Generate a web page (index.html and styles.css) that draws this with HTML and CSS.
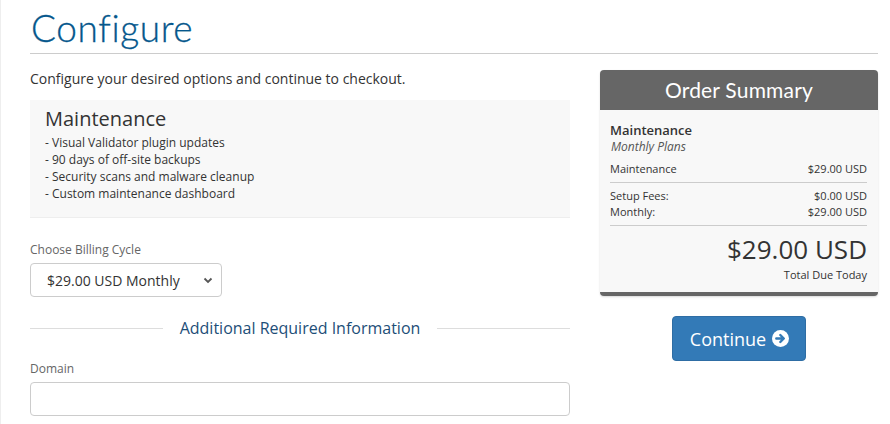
FILE: index.html
```html
<!DOCTYPE html>
<html>
<head>
<meta charset="utf-8">
<link rel="stylesheet" href="styles.css">
</head>
<body>
<div class="page">
  <div class="header">
    <h1 class="title">Configure</h1>
  </div>
  <div class="columns">
    <div class="main">
      <p class="intro">Configure your desired options and continue to checkout.</p>
      <div class="product">
        <div class="product-name">Maintenance</div>
        <div class="product-desc">
          <div>- Visual Validator plugin updates</div>
          <div>- 90 days of off-site backups</div>
          <div>- Security scans and malware cleanup</div>
          <div>- Custom maintenance dashboard</div>
        </div>
      </div>
      <label class="field-label">Choose Billing Cycle</label>
      <div class="select">
        <span>$29.00 USD Monthly</span>
        <svg class="chev" width="10" height="7" viewBox="0 0 10 7"><path d="M1.5 1.5 L5 5 L8.5 1.5" fill="none" stroke="#555" stroke-width="1.8"/></svg>
      </div>
      <div class="sub-heading">
        <span class="line"></span>
        <span class="sub-text">Additional Required Information</span>
        <span class="line"></span>
      </div>
      <label class="field-label domain-label">Domain</label>
      <div class="input"></div>
    </div>
    <div class="side">
      <div class="summary">
        <div class="summary-head">Order Summary</div>
        <div class="summary-body">
          <div class="s-name">Maintenance</div>
          <div class="s-group">Monthly Plans</div>
          <div class="s-row first-row"><span>Maintenance</span><span>$29.00 USD</span></div>
          <div class="s-hr"></div>
          <div class="s-row"><span>Setup Fees:</span><span>$0.00 USD</span></div>
          <div class="s-row"><span>Monthly:</span><span>$29.00 USD</span></div>
          <div class="s-hr"></div>
          <div class="s-total">$29.00 USD</div>
          <div class="s-due">Total Due Today</div>
        </div>
      </div>
      <div class="btn-wrap">
        <div class="btn">Continue <svg class="arrow" width="17" height="17" viewBox="0 0 17 17"><circle cx="8.5" cy="8.5" r="8.5" fill="#fff"/><path d="M4.3 8.5 H11.5 M8.3 5 L11.8 8.5 L8.3 12" fill="none" stroke="#337ab7" stroke-width="2.4" stroke-linecap="round" stroke-linejoin="round"/></svg></div>
      </div>
    </div>
  </div>
</div>
</body>
</html>
```

FILE: styles.css
```css
html, body {
  margin: 0;
  padding: 0;
  background: #fff;
}
body {
  font-family: "Open Sans", "Liberation Sans", sans-serif;
  color: #333;
  border-left: 1px solid #eee;
  min-height: 424px;
  box-sizing: border-box;
}
.page {
  padding: 0 12px 0 29px;
}
.header {
  padding-top: 8px;
  height: 45px;
  border-bottom: 1px solid #ccc;
  box-sizing: content-box;
}
.title {
  margin: 0;
  font-family: "Lato", "Open Sans", sans-serif;
  font-weight: 300;
  font-size: 37px;
  line-height: 40px;
  color: #05578c;
  padding-left: 1px;
  letter-spacing: 0.6px;
  -webkit-text-stroke: 0.3px #05578c;
}
.columns {
  display: flex;
  gap: 30px;
}
.main {
  width: 540px;
  flex: none;
}
.side {
  flex: 1;
  padding-top: 16px;
}
.intro {
  margin: 15px 0 11px;
  font-size: 14px;
  line-height: 20px;
}
.product {
  background: #f8f8f8;
  border-bottom: 1px solid #eee;
  padding: 7px 15px 15px;
}
.product-name {
  font-size: 20px;
  line-height: 24px;
  color: #333;
}
.product-desc {
  margin-top: 3px;
  font-size: 12px;
  line-height: 17px;
}
.field-label {
  display: block;
  margin-top: 23px;
  font-size: 12px;
  line-height: 17px;
  color: #666;
}
.select {
  margin-top: 5px;
  width: 192px;
  height: 34px;
  box-sizing: border-box;
  border: 1px solid #ccc;
  border-radius: 4px;
  display: flex;
  align-items: center;
  justify-content: space-between;
  padding: 0 8px 0 16px;
  font-size: 14px;
  color: #333;
}
.chev {
  display: block;
}
.sub-heading {
  display: flex;
  align-items: center;
  gap: 17px;
  margin-top: 20px;
  height: 22px;
}
.line {
  flex: 1;
  height: 1px;
  background: #ddd;
}
.sub-text {
  font-size: 16px;
  line-height: 22px;
  color: #1d4e78;
}
.domain-label {
  margin-top: 21px;
}
.input {
  margin-top: 5px;
  height: 34px;
  box-sizing: border-box;
  border: 1px solid #ccc;
  border-radius: 4px;
}
.summary {
  border-radius: 4px;
  overflow: hidden;
  background: #f8f8f8;
  border-bottom: 4px solid #666;
  box-shadow: 0 1px 2px rgba(0,0,0,0.15);
}
.summary-head {
  background: #666;
  color: #fff;
  height: 40px;
  line-height: 40px;
  text-align: center;
  font-family: "Lato", "Open Sans", sans-serif;
  font-weight: 400;
  font-size: 21px;
  letter-spacing: 0.2px;
}
.summary-body {
  padding: 11px 11px 9px 10px;
  font-size: 11px;
  line-height: 16px;
}
.s-name {
  font-size: 13px;
  line-height: 18px;
  font-weight: 600;
  color: #333;
}
.s-group {
  font-style: italic;
  font-size: 12px;
  color: #555;
  padding-left: 1px;
}
.s-row {
  display: flex;
  justify-content: space-between;
}
.first-row {
  margin-top: 6px;
}
.s-hr {
  height: 1px;
  background: #ccc;
  margin: 5px 0;
}
.s-total {
  margin-top: 8px;
  text-align: right;
  font-size: 26px;
  line-height: 30px;
  color: #333;
}
.s-due {
  margin-top: 3px;
  text-align: right;
}
.btn-wrap {
  display: flex;
  justify-content: center;
  margin-top: 20px;
}
.btn {
  background: #337ab7;
  border: 1px solid #2e6da4;
  border-radius: 4px;
  color: #fff;
  font-size: 18px;
  height: 45px;
  box-sizing: border-box;
  padding: 0 16px 0 17px;
  display: flex;
  align-items: center;
  gap: 6px;
}
.arrow {
  display: block;
}
```
